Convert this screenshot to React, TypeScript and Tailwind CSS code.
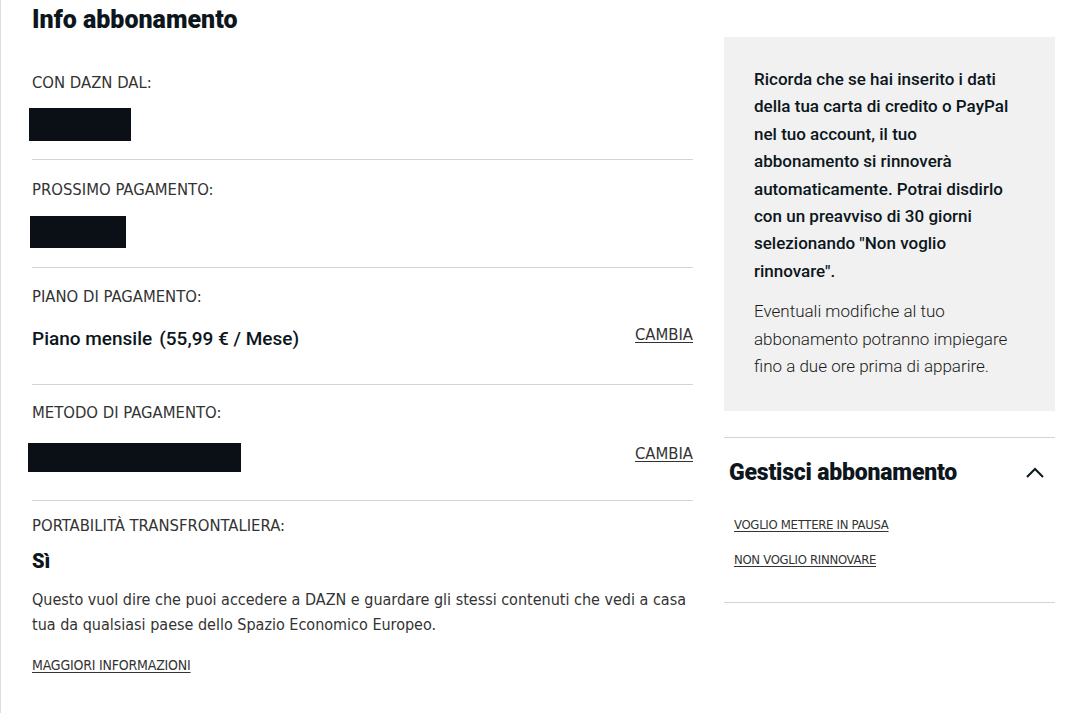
const narrow = "font-['DejaVu_Sans_Condensed','Liberation_Sans',sans-serif]";
const roboto = "font-['Roboto','Liberation_Sans',sans-serif]";

function Label({ children }: { children: React.ReactNode }) {
    return <div className={`${narrow} text-[16.5px] leading-[20px] text-[#333]`}>{children}</div>;
}

function Cambia() {
    return (
        <a className={`${narrow} text-[16.5px] leading-[20px] text-[#333] underline underline-offset-2`}>CAMBIA</a>
    );
}

function Redacted({ w, h }: { w: string; h: string }) {
    return <div className={`${w} ${h} bg-[#0a1016]`} />;
}

export default function App() {
    return (
        <div className="min-h-[713px] w-[1082px] bg-white border-l border-[#dedede] flex gap-[31px] pl-[31px] pr-[27px] text-[#0c161c]">
            {/* left column */}
            <div className="w-[661px] flex flex-col">
                <h1 className={`${roboto} text-[25px] leading-[28px] font-black mt-[6px]`}>Info abbonamento</h1>

                <div className="pt-[39px] pb-[18px] border-b border-[#d4d4d4]">
                    <Label>CON DAZN DAL:</Label>
                    <div className="mt-[15px] -ml-[3px]">
                        <Redacted w="w-[102px]" h="h-[33px]" />
                    </div>
                </div>

                <div className="pt-[20px] pb-[19px] border-b border-[#d4d4d4]">
                    <Label>PROSSIMO PAGAMENTO:</Label>
                    <div className="mt-[16px] -ml-[2px]">
                        <Redacted w="w-[96px]" h="h-[32px]" />
                    </div>
                </div>

                <div className="pt-[19px] pb-[28px] border-b border-[#d4d4d4]">
                    <Label>PIANO DI PAGAMENTO:</Label>
                    <div className="mt-[16px] h-[33px] flex items-start justify-between">
                        <div className={`${roboto} text-[19px] leading-[24px] font-medium mt-[4px]`}>
                            Piano mensile<span className="ml-[7px]">(55,99 € / Mese)</span>
                        </div>
                        <div className="-mt-[1px]">
                            <Cambia />
                        </div>
                    </div>
                </div>

                <div className="pt-[18px] pb-[28px] border-b border-[#d4d4d4]">
                    <Label>METODO DI PAGAMENTO:</Label>
                    <div className="mt-[20px] flex items-start justify-between">
                        <div className="-ml-[4px]">
                            <Redacted w="w-[213px]" h="h-[29px]" />
                        </div>
                        <div className="-mt-[2px]">
                            <Cambia />
                        </div>
                    </div>
                </div>

                <div className="pt-[15px]">
                    <Label>PORTABILITÀ TRANSFRONTALIERA:</Label>
                    <div className={`${roboto} text-[20px] leading-[24px] font-black mt-[13px]`}>Sì</div>
                    <p className={`${narrow} text-[16px] leading-[25px] text-[#333] mt-[14px]`}>
                        Questo vuol dire che puoi accedere a DAZN e guardare gli stessi contenuti che vedi a casa tua da qualsiasi paese dello Spazio Economico Europeo.
                    </p>
                    <a className={`${narrow} block text-[14px] leading-[18px] tracking-[-0.2px] text-[#333] underline underline-offset-2 mt-[19px]`}>
                        MAGGIORI INFORMAZIONI
                    </a>
                </div>
            </div>

            {/* right column */}
            <div className="w-[331px] pt-[37px]">
                <div className={`${roboto} bg-[#f0f1f0] pt-[29px] pb-[31px] pl-[30px] pr-[40px]`}>
                    <p className="text-[17px] leading-[27.4px] font-medium text-[#0c161c]">
                        Ricorda che se hai inserito i dati della tua carta di credito o PayPal nel tuo account, il tuo abbonamento si rinnoverà automaticamente. Potrai disdirlo con un preavviso di 30 giorni selezionando "Non voglio rinnovare".
                    </p>
                    <p className="mt-[13px] text-[17px] leading-[27.4px] font-light text-[#1a1a1a]">
                        Eventuali modifiche al tuo abbonamento potranno impiegare fino a due ore prima di apparire.
                    </p>
                </div>

                <div className="mt-[26px] border-t border-b border-[#d4d4d4] pb-[33px]">
                    <div className="flex items-center justify-between pl-[5px] pr-[11px] pt-[21px]">
                        <h2 className={`${roboto} text-[23px] leading-[28px] font-black tracking-[-0.2px]`}>Gestisci abbonamento</h2>
                        <svg width="18" height="11" viewBox="0 0 18 11" fill="none" className="-mt-[2px]">
                            <path d="M1 10 L9 2 L17 10" stroke="#0c161c" strokeWidth="2" />
                        </svg>
                    </div>
                    <div className="pl-[10px] mt-[29px] flex flex-col gap-[17px]">
                        <a className={`${narrow} text-[13px] leading-[18px] tracking-[-0.3px] text-[#333] underline underline-offset-2`}>VOGLIO METTERE IN PAUSA</a>
                        <a className={`${narrow} text-[13px] leading-[18px] tracking-[-0.3px] text-[#333] underline underline-offset-2`}>NON VOGLIO RINNOVARE</a>
                    </div>
                </div>
            </div>
        </div>
    );
}
